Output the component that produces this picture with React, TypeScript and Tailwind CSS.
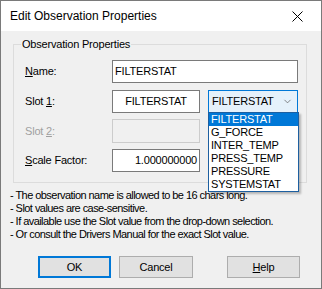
import { ChevronDown } from 'lucide-react'

const font = { fontFamily: '"Liberation Sans", Arial, sans-serif' }

const slotOptions = ['FILTERSTAT', 'G_FORCE', 'INTER_TEMP', 'PRESS_TEMP', 'PRESSURE', 'SYSTEMSTAT']

const notes = [
  '- The observation name is allowed to be 16 chars long.',
  '- Slot values are case-sensitive.',
  '- If available use the Slot value from the drop-down selection.',
  '- Or consult the Drivers Manual for the exact Slot value.',
]

const App = () => {
  return (
    <div
      className="w-[322px] h-[289px] flex flex-col bg-[#f0f0f0] border border-[#7a7a7a] text-[11px] tracking-[-0.2px] text-black leading-[13px] whitespace-nowrap"
      style={font}
    >
      {/* 标题栏 */}
      <div className="h-[30px] bg-white flex items-center justify-between pl-[9px] pr-[18px] shrink-0">
        <span className="text-[12px] tracking-normal">Edit Observation Properties</span>
        <svg width="11" height="11" viewBox="0 0 11 11">
          <path d="M0.5 0.5 L10.5 10.5 M10.5 0.5 L0.5 10.5" stroke="#000" strokeWidth="1" />
        </svg>
      </div>

      {/* 分组框 */}
      <div className="relative mt-[13px] ml-[12px] w-[294px] h-[139px] shrink-0 border border-[#dcdcdc] pl-[11px] pt-[15px]">
        <span className="absolute left-[7px] -top-[7px] px-[1px] bg-[#f0f0f0]">Observation Properties</span>

        <div className="flex items-center h-[23px]">
          <span className="w-[87px]"><u>N</u>ame:</span>
          <div className="w-[186px] h-[23px] bg-white border border-[#7a7a7a] flex items-center px-[2px]">FILTERSTAT</div>
        </div>

        <div className="flex items-center h-[23px] mt-[7px]">
          <span className="w-[87px]">Slot <u>1</u>:</span>
          <div className="w-[88px] h-[23px] bg-white border border-[#7a7a7a] flex items-center justify-center">FILTERSTAT</div>
          <div className="relative ml-[8px] w-[90px] h-[23px] bg-[#e5f1fb] border border-[#0078d7] flex items-center justify-between pl-[3px] pr-[4px]">
            <span>FILTERSTAT</span>
            <ChevronDown size={11} strokeWidth={1.5} color="#555" />
            {/* 下拉列表 */}
            <div className="absolute left-[-1px] top-[21px] w-[91px] bg-white border border-[#1d5fa0] shadow-[2px_2px_2px_rgba(0,0,0,0.25)] z-10">
              {slotOptions.map((opt, i) => (
                <div
                  key={opt}
                  className={i === 0 ? 'h-[13px] pl-[2px] bg-[#0078d7] text-white' : 'h-[13px] pl-[2px]'}
                >
                  {opt}
                </div>
              ))}
            </div>
          </div>
        </div>

        <div className="flex items-center h-[24px] mt-[6px]">
          <span className="w-[87px] text-[#a0a0a0]">Slot <u>2</u>:</span>
          <div className="w-[88px] h-[24px] bg-[#f0f0f0] border border-[#cccccc]" />
        </div>

        <div className="flex items-center h-[23px] mt-[6px]">
          <span className="w-[87px]"><u>S</u>cale Factor:</span>
          <div className="w-[88px] h-[23px] bg-white border border-[#7a7a7a] flex items-center justify-end pr-[2px]">1.000000000</div>
        </div>
      </div>

      {/* 说明 */}
      <div className="mt-[6px] pl-[9px] flex flex-col tracking-[-0.55px]">
        {notes.map((n) => (
          <span key={n} className="block h-[13px]">{n}</span>
        ))}
      </div>

      {/* 按钮 */}
      <div className="mt-[15px] flex items-center pl-[37px]">
        <button className="w-[73px] h-[22px] bg-[#e1e1e1] border-2 border-[#0078d7]">OK</button>
        <button className="ml-[8px] w-[74px] h-[22px] bg-[#e1e1e1] border border-[#adadad]">Cancel</button>
        <button className="ml-[34px] w-[73px] h-[22px] bg-[#e1e1e1] border border-[#adadad]"><u>H</u>elp</button>
      </div>
    </div>
  )
}

export default App
